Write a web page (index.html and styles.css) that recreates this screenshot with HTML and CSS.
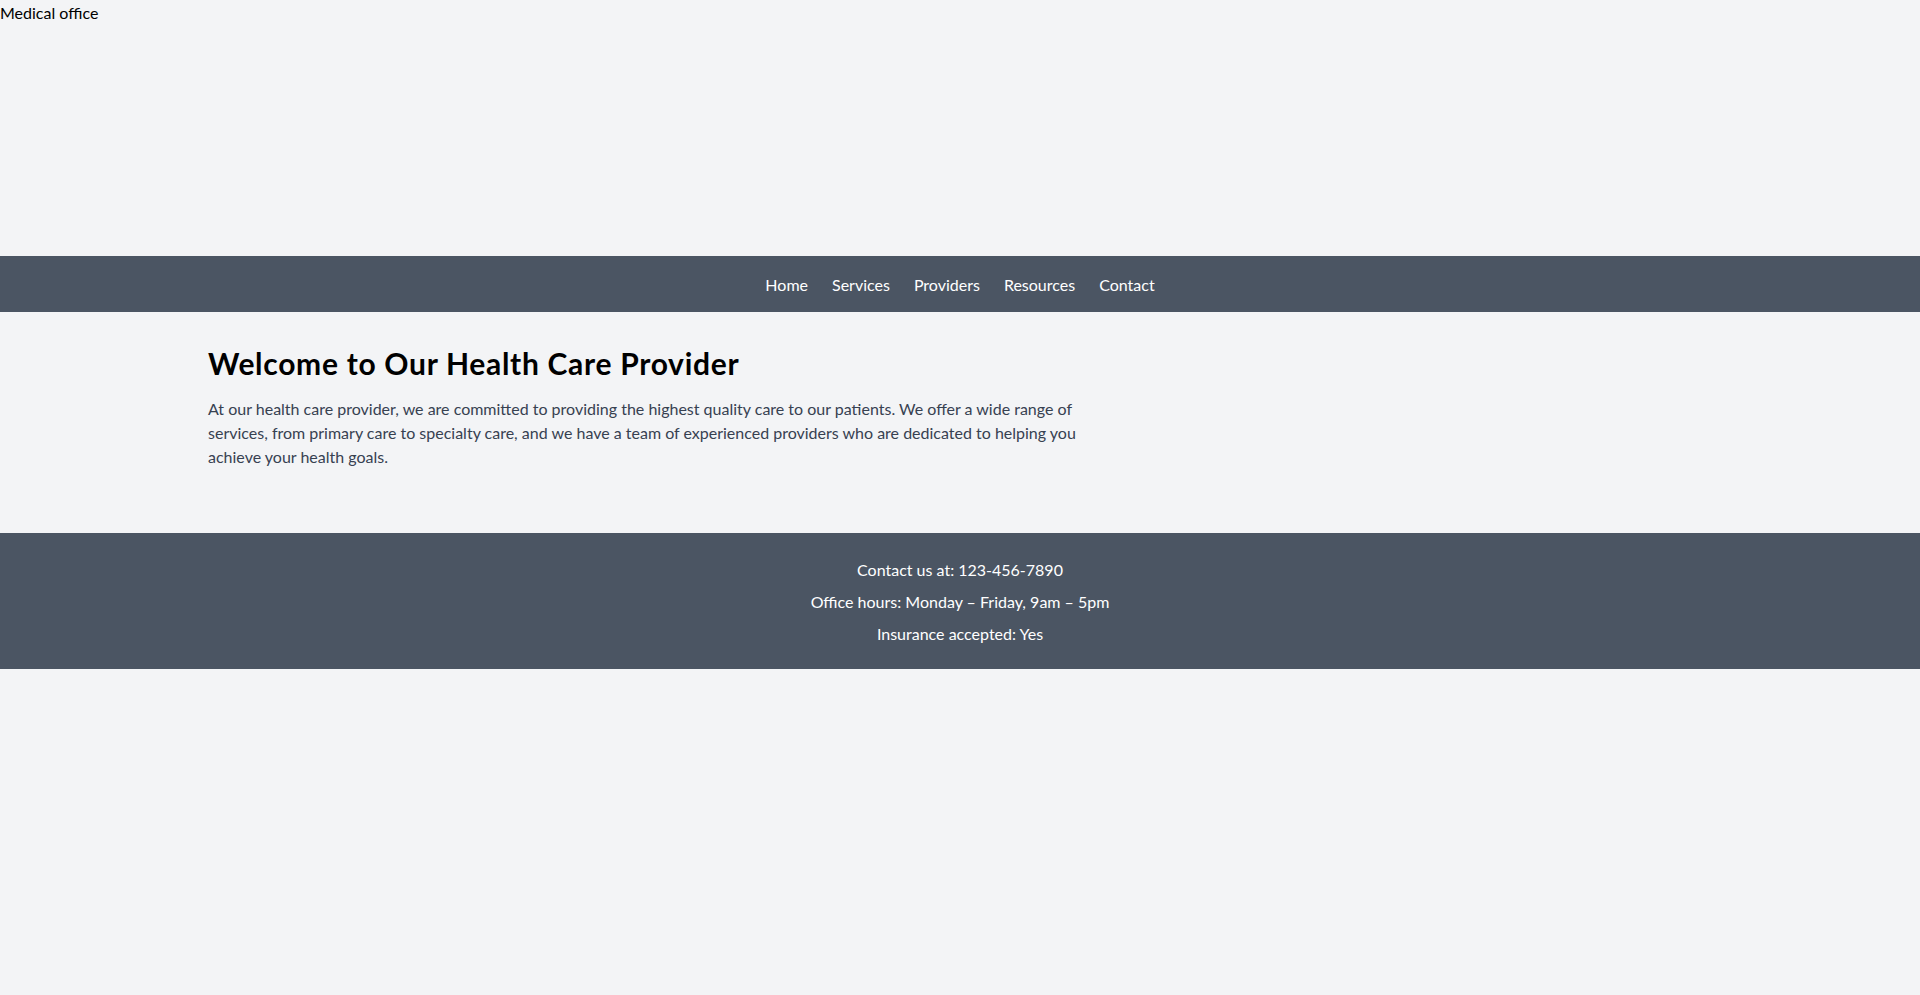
FILE: index.html
```html
<!DOCTYPE html>
<html lang="en">
<head>
<meta charset="utf-8">
<title>Medical office</title>
<link rel="stylesheet" href="styles.css">
</head>
<body>
<header class="top">Medical office</header>
<nav class="nav">
  <a href="#">Home</a>
  <a href="#">Services</a>
  <a href="#">Providers</a>
  <a href="#">Resources</a>
  <a href="#">Contact</a>
</nav>
<main class="main">
  <h1 class="title">Welcome to Our Health Care Provider</h1>
  <p class="intro">At our health care provider, we are committed to providing the highest quality care to our patients. We offer a wide range of services, from primary care to specialty care, and we have a team of experienced providers who are dedicated to helping you achieve your health goals.</p>
</main>
<footer class="footer">
  <p>Contact us at: 123-456-7890</p>
  <p>Office hours: Monday – Friday, 9am – 5pm</p>
  <p>Insurance accepted: Yes</p>
</footer>
</body>
</html>
```
FILE: styles.css
```css
html, body {
  margin: 0;
  padding: 0;
}
body {
  background: #f3f4f6;
  font-family: Lato, "Open Sans", sans-serif;
  font-size: 16px;
  line-height: 24px;
  color: #000;
  min-height: 995px;
}
.top {
  height: 255px;
  padding-top: 1px;
}
.nav {
  background: #4b5563;
  display: flex;
  justify-content: center;
  gap: 24px;
  padding: 17px 0 15px;
}
.nav a {
  color: #fff;
  text-decoration: none;
}
.main {
  max-width: 1536px;
  margin: 0 auto;
  padding: 33px 16px 64px;
  box-sizing: border-box;
}
.title {
  margin: 0 0 16px;
  font-size: 30px;
  line-height: 36px;
  font-weight: 700;
  letter-spacing: 0.7px;
}
.intro {
  margin: 0;
  max-width: 896px;
  color: #374151;
}
.footer {
  background: #4b5563;
  color: #fff;
  text-align: center;
  padding: 25px 0 23px;
  display: flex;
  flex-direction: column;
  gap: 8px;
}
.footer p {
  margin: 0;
}
```
